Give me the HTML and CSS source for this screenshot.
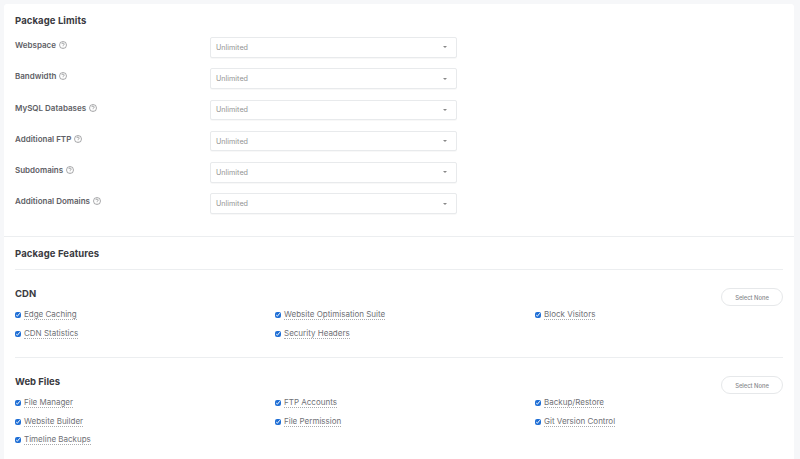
FILE: index.html
```html
<!DOCTYPE html>
<html lang="en">
<head>
<meta charset="utf-8">
<title>Package</title>
<link rel="stylesheet" href="styles.css">
</head>
<body>
<main class="card">
  <section class="limits">
    <h2 class="title">Package Limits</h2>
    <div class="rows">
      <div class="row"><span class="label">Webspace<svg class="help" viewBox="0 0 16 16"><circle cx="8" cy="8" r="7"/><path d="M5.8 6.2a2.2 2.2 0 1 1 3.4 1.9c-.8.5-1.2.9-1.2 1.9"/><path d="M8 11.6v1"/></svg></span><div class="select"><span>Unlimited</span><i class="caret"></i></div></div>
      <div class="row"><span class="label">Bandwidth<svg class="help" viewBox="0 0 16 16"><circle cx="8" cy="8" r="7"/><path d="M5.8 6.2a2.2 2.2 0 1 1 3.4 1.9c-.8.5-1.2.9-1.2 1.9"/><path d="M8 11.6v1"/></svg></span><div class="select"><span>Unlimited</span><i class="caret"></i></div></div>
      <div class="row"><span class="label">MySQL Databases<svg class="help" viewBox="0 0 16 16"><circle cx="8" cy="8" r="7"/><path d="M5.8 6.2a2.2 2.2 0 1 1 3.4 1.9c-.8.5-1.2.9-1.2 1.9"/><path d="M8 11.6v1"/></svg></span><div class="select"><span>Unlimited</span><i class="caret"></i></div></div>
      <div class="row"><span class="label">Additional FTP<svg class="help" viewBox="0 0 16 16"><circle cx="8" cy="8" r="7"/><path d="M5.8 6.2a2.2 2.2 0 1 1 3.4 1.9c-.8.5-1.2.9-1.2 1.9"/><path d="M8 11.6v1"/></svg></span><div class="select"><span>Unlimited</span><i class="caret"></i></div></div>
      <div class="row"><span class="label">Subdomains<svg class="help" viewBox="0 0 16 16"><circle cx="8" cy="8" r="7"/><path d="M5.8 6.2a2.2 2.2 0 1 1 3.4 1.9c-.8.5-1.2.9-1.2 1.9"/><path d="M8 11.6v1"/></svg></span><div class="select"><span>Unlimited</span><i class="caret"></i></div></div>
      <div class="row"><span class="label">Additional Domains<svg class="help" viewBox="0 0 16 16"><circle cx="8" cy="8" r="7"/><path d="M5.8 6.2a2.2 2.2 0 1 1 3.4 1.9c-.8.5-1.2.9-1.2 1.9"/><path d="M8 11.6v1"/></svg></span><div class="select"><span>Unlimited</span><i class="caret"></i></div></div>
    </div>
  </section>
  <section class="features">
    <h2 class="title features-title">Package Features</h2>
    <div class="group">
      <div class="group-head"><h3 class="group-title">CDN</h3><button class="btn">Select None</button></div>
      <div class="checks">
        <label class="check"><input type="checkbox" checked><span>Edge Caching</span></label>
        <label class="check"><input type="checkbox" checked><span>Website Optimisation Suite</span></label>
        <label class="check"><input type="checkbox" checked><span>Block Visitors</span></label>
        <label class="check"><input type="checkbox" checked><span>CDN Statistics</span></label>
        <label class="check"><input type="checkbox" checked><span>Security Headers</span></label>
      </div>
    </div>
    <div class="group">
      <div class="group-head"><h3 class="group-title">Web Files</h3><button class="btn">Select None</button></div>
      <div class="checks">
        <label class="check"><input type="checkbox" checked><span>File Manager</span></label>
        <label class="check"><input type="checkbox" checked><span>FTP Accounts</span></label>
        <label class="check"><input type="checkbox" checked><span>Backup/Restore</span></label>
        <label class="check"><input type="checkbox" checked><span>Website Builder</span></label>
        <label class="check"><input type="checkbox" checked><span>File Permission</span></label>
        <label class="check"><input type="checkbox" checked><span>Git Version Control</span></label>
        <label class="check"><input type="checkbox" checked><span>Timeline Backups</span></label>
      </div>
    </div>
  </section>
</main>
</body>
</html>
```
FILE: styles.css
```css
* { box-sizing: border-box; }
html, body { height: 100%; }
body {
  margin: 0;
  padding: 4px 6px 0 4px;
  background: #f6f7f9;
  font-family: "Inter", "Liberation Sans", sans-serif;
  overflow: hidden;
  height: 459px;
}
.card { background: #fff; border-radius: 3px; height: 470px; }
.limits { padding: 11px 11px 0; height: 233px; border-bottom: 1px solid #eceef0; }
.title { margin: 0; font-size: 9.5px; line-height: 11px; font-weight: 700; color: #3a3a3f; letter-spacing: .1px; }
.rows { margin-top: 11px; display: flex; flex-direction: column; gap: 10.8px; }
.row { display: flex; height: 20.5px; }
.label {
  width: 195px; font-size: 8px; line-height: 10px; font-weight: 600; color: #5e6065;
  display: flex; align-items: center; gap: 3px; height: 10px; margin-top: 3px; white-space: pre;
}
.help { width: 8px; height: 8px; fill: none; stroke: #55575b; stroke-width: 1; }
.select {
  width: 247px; height: 100%; border: 1px solid #e8eaec; border-radius: 2px; background: #fff;
  display: flex; align-items: center; justify-content: space-between; padding: 0 9px 0 5px;
  font-size: 7.2px; color: #939393; box-shadow: 0 1px 1px rgba(0,0,0,.03);
}
.caret { width: 0; height: 0; border-left: 2px solid transparent; border-right: 2px solid transparent; border-top: 2px solid #888; }
.features { padding: 0 11px; }
.features-title { padding: 11px 0 10px; border-bottom: 1px solid #eceef0; }
.group { padding-top: 18px; padding-bottom: 18.5px; border-bottom: 1px solid #eceef0; }
.group:last-child { border-bottom: 0; }
.group-head { display: flex; justify-content: space-between; align-items: flex-start; height: 18px; }
.group-title { margin: 0; font-size: 9.5px; line-height: 11px; font-weight: 700; color: #3a3a3f; }
.btn {
  width: 62px; height: 18px; padding: 0; border: 1px solid #e6e8ea; border-radius: 9px; background: #fff;
  font: 500 5.8px "Inter", "Liberation Sans", sans-serif; color: #85878b;
}
.checks { display: grid; grid-template-columns: repeat(3, 260px); row-gap: 9px; margin-top: 4.5px; }
.check { display: flex; align-items: center; gap: 3px; height: 9.5px; font-size: 8px; color: #6f7176; }
.check input { margin: 0; width: 6px; height: 6px; accent-color: #1f6fd6; }
.check span { border-bottom: 1px dotted #a9abae; line-height: 9px; }
```
